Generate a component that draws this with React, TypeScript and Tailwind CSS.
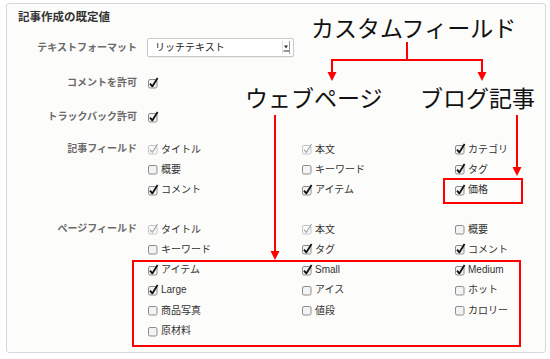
import React from "react";

type Field = { label: string; state: "on" | "off" | "locked" };

const articleFields: Field[][] = [
  [
    { label: "タイトル", state: "locked" },
    { label: "概要", state: "off" },
    { label: "コメント", state: "on" },
  ],
  [
    { label: "本文", state: "locked" },
    { label: "キーワード", state: "off" },
    { label: "アイテム", state: "on" },
  ],
  [
    { label: "カテゴリ", state: "on" },
    { label: "タグ", state: "on" },
    { label: "価格", state: "on" },
  ],
];

const pageFields: Field[][] = [
  [
    { label: "タイトル", state: "locked" },
    { label: "キーワード", state: "off" },
    { label: "アイテム", state: "on" },
    { label: "Large", state: "on" },
    { label: "商品写真", state: "off" },
    { label: "原材料", state: "off" },
  ],
  [
    { label: "本文", state: "locked" },
    { label: "タグ", state: "on" },
    { label: "Small", state: "on" },
    { label: "アイス", state: "off" },
    { label: "値段", state: "off" },
  ],
  [
    { label: "概要", state: "off" },
    { label: "コメント", state: "on" },
    { label: "Medium", state: "on" },
    { label: "ホット", state: "off" },
    { label: "カロリー", state: "off" },
  ],
];

const CheckBox = ({ state }: { state: Field["state"] }) => {
  const locked = state === "locked";
  return (
    <svg width="11" height="12" viewBox="0 0 11 12" className="shrink-0">
      <rect
        x="0.5"
        y="2.5"
        width="8.5"
        height="8.5"
        rx="1.5"
        fill={locked ? "#fafafa" : "#f3f3f3"}
        stroke={locked ? "#c4c4c4" : "#8c8c8c"}
      />
      {state !== "off" && (
        <path
          d="M2 6.6 L4.3 9.4 L9.6 1"
          fill="none"
          stroke={locked ? "#a8a8a8" : "#111"}
          strokeWidth={locked ? 1.2 : 1.8}
          strokeLinejoin="round"
        />
      )}
    </svg>
  );
};

const FieldGrid = ({ cols }: { cols: Field[][] }) => (
  <div className="grid grid-cols-[154px_153px_1fr] ml-[1px]">
    {cols.map((col, i) => (
      <div key={i} className="flex flex-col">
        {col.map((f) => (
          <div key={f.label} className="flex items-center h-[20.3px]">
            <CheckBox state={f.state} />
            <span className="ml-[2px] text-[10px] text-[#333]">{f.label}</span>
          </div>
        ))}
      </div>
    ))}
  </div>
);

const Row = ({
  label,
  className,
  children,
}: {
  label: string;
  className?: string;
  children: React.ReactNode;
}) => (
  <div className={`flex items-start ${className ?? ""}`}>
    <div className="w-[130px] shrink-0 text-right text-[10px] font-bold text-[#6a6a6a] leading-[20px]">
      {label}
    </div>
    <div className="ml-[10px]">{children}</div>
  </div>
);

export default function App() {
  return (
    <div className="relative w-[550px] h-[359px] bg-white overflow-hidden font-['Liberation_Sans','Noto_Sans_CJK_JP',sans-serif]">
      <div className="ml-[6px] mt-[3px] w-[540px] h-[350px] border border-[#d8d8d8] rounded-[3px] bg-[#fcfcfa]">
        <h2 className="pl-[11px] pt-[5px] text-[11.5px] font-bold text-[#333] leading-[16px]">
          記事作成の既定値
        </h2>

        <Row label="テキストフォーマット" className="mt-[13px]">
          <div className="flex items-center justify-between w-[147px] h-[19px] bg-white border border-[#c9c9c9] rounded-[2px] shadow-[0_1px_1px_rgba(0,0,0,0.06)] pl-[7px] pr-[3px]">
            <span className="text-[10px] text-[#222]">リッチテキスト</span>
            <svg width="8" height="13" viewBox="0 0 8 13">
              <line x1="0.5" y1="0" x2="0.5" y2="13" stroke="#e2e2e2" />
              <line x1="7.5" y1="0" x2="7.5" y2="13" stroke="#9a9a9a" />
              <path d="M2 4.5 L6 4.5 L4 7.5 Z" fill="#333" />
              <line x1="1.5" y1="10" x2="7" y2="10" stroke="#333" />
            </svg>
          </div>
        </Row>

        <Row label="コメントを許可" className="mt-[15px]">
          <div className="flex items-center h-[20px] ml-[1px]">
            <CheckBox state="on" />
          </div>
        </Row>

        <Row label="トラックバック許可" className="mt-[14px]">
          <div className="flex items-center h-[20px] ml-[1px]">
            <CheckBox state="on" />
          </div>
        </Row>

        <Row label="記事フィールド" className="mt-[12px]">
          <FieldGrid cols={articleFields} />
        </Row>

        <Row label="ページフィールド" className="mt-[19px]">
          <FieldGrid cols={pageFields} />
        </Row>
      </div>

      {/* annotations */}
      <svg
        className="absolute inset-0 pointer-events-none"
        width="550"
        height="359"
        viewBox="0 0 550 359"
      >
        <g stroke="#ff0000" strokeWidth="2" fill="none">
          <path d="M407 42 V60 M332 60 H482 M332 59 V73 M482 59 V73" />
          <path d="M275 115 V252" />
          <path d="M517 115 V168" />
          <rect x="133" y="261" width="387" height="85" />
          <rect x="444" y="179" width="78" height="24" />
        </g>
        <g fill="#ff0000">
          <path d="M327.5 72 H336.5 L332 81 Z" />
          <path d="M477.5 72 H486.5 L482 81 Z" />
          <path d="M270.5 251 H279.5 L275 260 Z" />
          <path d="M512.5 167 H521.5 L517 176 Z" />
        </g>
      </svg>

      <div className="absolute left-[311px] top-[17.5px] text-[23px] leading-[23px] text-[#111] whitespace-nowrap">
        カスタムフィールド
      </div>
      <div className="absolute left-[245px] top-[87.5px] text-[23px] leading-[23px] text-[#111] whitespace-nowrap">
        ウェブページ
      </div>
      <div className="absolute left-[420px] top-[87.5px] text-[23px] leading-[23px] text-[#111] whitespace-nowrap">
        ブログ記事
      </div>
    </div>
  );
}
